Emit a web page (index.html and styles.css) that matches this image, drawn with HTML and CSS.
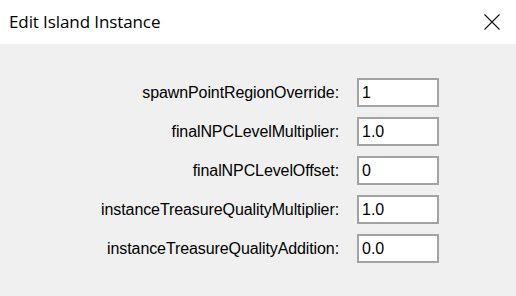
FILE: index.html
```html
<!DOCTYPE html>
<html>
<head>
<meta charset="utf-8">
<link rel="stylesheet" href="styles.css">
</head>
<body>
<div class="window">
  <div class="titlebar">
    <span class="title">Edit Island Instance</span>
    <svg class="close" width="16" height="16" viewBox="0 0 16 16"><path d="M0.5 0.5 L15.5 15.5 M15.5 0.5 L0.5 15.5" stroke="#111" stroke-width="1.1" fill="none"/></svg>
  </div>
  <div class="content">
    <div class="form">
      <div class="label">spawnPointRegionOverride:</div><div class="field">1</div>
      <div class="label">finalNPCLevelMultiplier:</div><div class="field">1.0</div>
      <div class="label">finalNPCLevelOffset:</div><div class="field">0</div>
      <div class="label">instanceTreasureQualityMultiplier:</div><div class="field">1.0</div>
      <div class="label">instanceTreasureQualityAddition:</div><div class="field">0.0</div>
    </div>
  </div>
</div>
</body>
</html>
```
FILE: styles.css
```css
html, body {
  margin: 0;
  padding: 0;
  background: #f0f0f0;
}
.window {
  width: 516px;
  height: 296px;
  display: flex;
  flex-direction: column;
  background: #f0f0f0;
}
.titlebar {
  height: 44px;
  background: #ffffff;
  display: flex;
  align-items: center;
  justify-content: space-between;
  padding: 0 16px 0 9px;
  box-sizing: border-box;
}
.title {
  font-family: "Open Sans", "Noto Sans", sans-serif;
  font-size: 17px;
  color: #000;
  letter-spacing: -0.1px;
  margin-top: -1px;
}
.close {
  display: block;
  margin-top: -1px;
}
.content {
  flex: 1;
  padding: 34px 77px 0 0;
}
.form {
  display: grid;
  grid-template-columns: 1fr 82px;
  column-gap: 18px;
  row-gap: 10px;
  align-items: center;
}
.label {
  font-family: "Liberation Sans", Arial, sans-serif;
  font-size: 16px;
  color: #000;
  text-align: right;
  white-space: nowrap;
  letter-spacing: -0.1px;
}
.field {
  height: 29px;
  box-sizing: border-box;
  border: 2px solid #a3a3a3;
  background: #ffffff;
  font-family: "Liberation Sans", Arial, sans-serif;
  font-size: 16px;
  color: #000;
  padding: 0 3px;
  line-height: 25px;
}
```
